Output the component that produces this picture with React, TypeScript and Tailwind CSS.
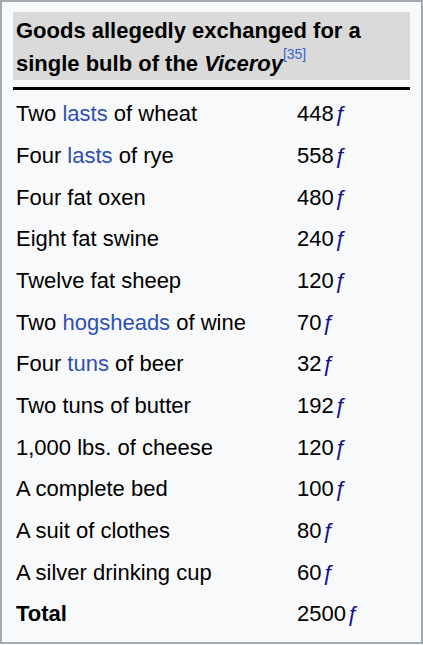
import React from "react";

const F = () => <span className="text-[#14108a] italic">ƒ</span>;

const L = ({ children }: { children: React.ReactNode }) => (
  <span className="text-[#2f50b0]">{children}</span>
);

const rows: [React.ReactNode, string][] = [
  [<>Two <L>lasts</L> of wheat</>, "448"],
  [<>Four <L>lasts</L> of rye</>, "558"],
  [<>Four fat oxen</>, "480"],
  [<>Eight fat swine</>, "240"],
  [<>Twelve fat sheep</>, "120"],
  [<>Two <L>hogsheads</L> of wine</>, "70"],
  [<>Four <L>tuns</L> of beer</>, "32"],
  [<>Two tuns of butter</>, "192"],
  [<>1,000 lbs. of cheese</>, "120"],
  [<>A complete bed</>, "100"],
  [<>A suit of clothes</>, "80"],
  [<>A silver drinking cup</>, "60"],
];

export default function App() {
  return (
    <div
      className="w-[423px] h-[644px] border-[2px] border-[#a2a9b1] bg-[#f8f9fa] text-[#202122] px-[11px] pt-[10px]"
      style={{ fontFamily: '"Liberation Sans", Arial, sans-serif' }}
    >
      <div className="bg-[#dadada] px-[3px] pt-[2px] pb-0 text-[22px] leading-[33px] font-bold text-black">
        Goods allegedly exchanged for a single bulb of the <i>Viceroy</i>
        <span className="text-[#3366cc] font-normal text-[14px] leading-none relative -top-[12px]">[35]</span>
      </div>
      <div className="h-[3px] bg-black mt-[7px]" />
      <div className="text-[22px] text-black pt-[3px]">
        {rows.map(([a, b], i) => (
          <div key={i} className="flex h-[41.67px] items-center">
            <div className="w-[284px] pl-[3px]">{a}</div>
            <div>
              {b}
              <F />
            </div>
          </div>
        ))}
        <div className="flex h-[41.67px] items-center">
          <div className="w-[284px] pl-[3px] font-bold">Total</div>
          <div>
            2500
            <F />
          </div>
        </div>
      </div>
    </div>
  );
}
